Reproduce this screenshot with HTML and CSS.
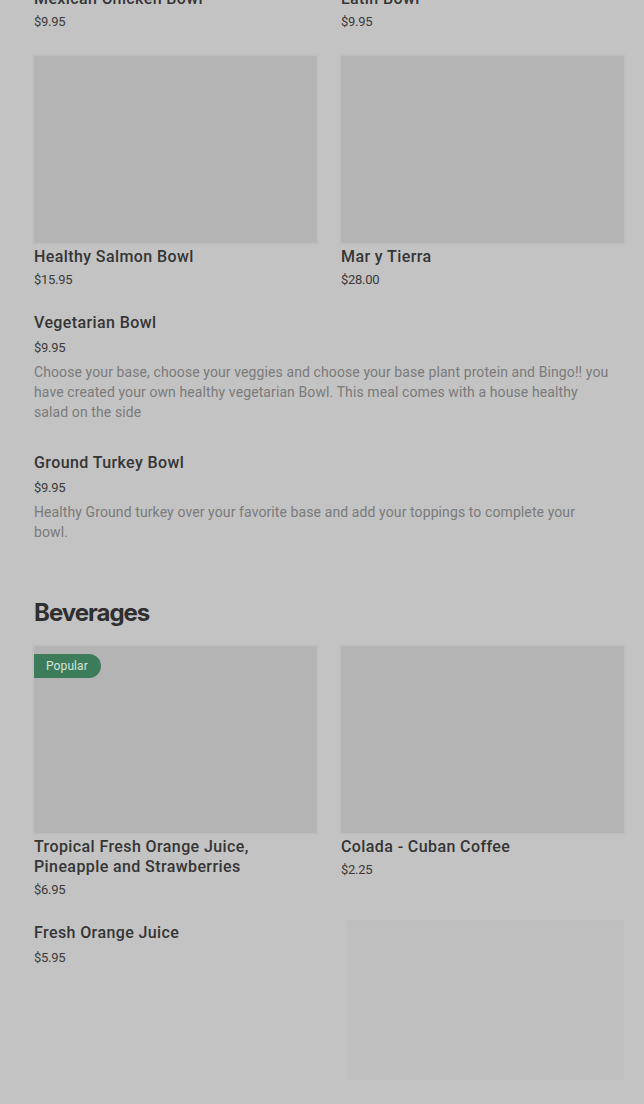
FILE: index.html
```html
<!DOCTYPE html>
<html lang="en">
<head>
<meta charset="utf-8">
<title>Menu</title>
<link rel="stylesheet" href="styles.css">
</head>
<body>
<main class="menu">
  <section class="section">
    <div class="grid grid-top">
      <div class="item">
        <h3 class="title">Mexican Chicken Bowl</h3>
        <div class="price">$9.95</div>
      </div>
      <div class="item">
        <h3 class="title">Latin Bowl</h3>
        <div class="price">$9.95</div>
      </div>
      <div class="item">
        <div class="thumb"></div>
        <h3 class="title">Healthy Salmon Bowl</h3>
        <div class="price">$15.95</div>
      </div>
      <div class="item">
        <div class="thumb"></div>
        <h3 class="title">Mar y Tierra</h3>
        <div class="price">$28.00</div>
      </div>
    </div>

    <div class="wide">
      <h3 class="title">Vegetarian Bowl</h3>
      <div class="price price-loose">$9.95</div>
      <p class="desc">Choose your base, choose your veggies and choose your base plant protein and Bingo!! you have created your own healthy vegetarian Bowl. This meal comes with a house healthy salad on the side</p>
    </div>

    <div class="wide">
      <h3 class="title">Ground Turkey Bowl</h3>
      <div class="price price-loose">$9.95</div>
      <p class="desc">Healthy Ground turkey over your favorite base and add your toppings to complete your bowl.</p>
    </div>
  </section>

  <section class="section">
    <h2 class="heading">Beverages</h2>
    <div class="grid grid-bev">
      <div class="item">
        <div class="thumb">
          <span class="badge">Popular</span>
        </div>
        <h3 class="title">Tropical Fresh Orange Juice, Pineapple and Strawberries</h3>
        <div class="price">$6.95</div>
      </div>
      <div class="item">
        <div class="thumb"></div>
        <h3 class="title">Colada - Cuban Coffee</h3>
        <div class="price">$2.25</div>
      </div>
      <div class="item">
        <h3 class="title">Fresh Orange Juice</h3>
        <div class="price price-loose">$5.95</div>
      </div>
      <div class="item skeleton-cell">
        <div class="skeleton"></div>
      </div>
    </div>
  </section>
</main>
</body>
</html>
```

FILE: styles.css
```css
* { box-sizing: border-box; }

html, body {
  margin: 0;
  padding: 0;
  background: #c3c3c3;
}

body {
  font-family: Roboto, "Liberation Sans", Arial, sans-serif;
  color: #333333;
  width: 644px;
  height: 1104px;
  overflow: hidden;
}

.menu {
  padding: 0 20px 0 34px;
}

.grid {
  display: grid;
  grid-template-columns: 283px 283px;
  column-gap: 24px;
  row-gap: 25px;
}

.grid-top {
  margin-top: -11px;
}

.grid-bev {
  row-gap: 24px;
}

.item {
  display: flex;
  flex-direction: column;
}

.thumb {
  position: relative;
  height: 187px;
  background: #b4b4b4;
  box-shadow: 0 0 0 2px #bfbfbf;
  margin-bottom: 4px;
}

.title {
  margin: 0;
  font-size: 16px;
  line-height: 20px;
  font-weight: 500;
  color: #353535;
  letter-spacing: 0.4px;
}

.price {
  margin-top: 4px;
  font-size: 13px;
  line-height: 18px;
  color: #3a3a3a;
  letter-spacing: -0.3px;
}

.price-loose {
  margin-top: 6px;
}

.wide {
  padding-right: 14px;
}

.grid-top + .wide {
  margin-top: 24px;
}

.wide + .wide {
  margin-top: 31px;
}

.desc {
  margin: 5px 0 0;
  font-size: 14px;
  line-height: 20px;
  color: #7a7a7a;
  letter-spacing: 0.1px;
}

.heading {
  margin: 56px 0 18px;
  font-family: Inter, "Open Sans", sans-serif;
  font-size: 24px;
  line-height: 30px;
  font-weight: 700;
  letter-spacing: -1px;
  color: #2f2f2f;
}

.badge {
  position: absolute;
  left: 0;
  top: 8px;
  height: 24px;
  padding: 0 13px 0 12px;
  border-radius: 0 12px 12px 0;
  background: #3d7c5b;
  color: #d6e4da;
  font-size: 12px;
  line-height: 24px;
  letter-spacing: 0.1px;
}

.skeleton-cell {
  margin-left: 6px;
  margin-top: -3px;
}

.skeleton {
  height: 160px;
  background: #c0c0c0;
  border-top: 8px solid #bebebe;
  border-left: 5px solid #bfbfbf;
}
```
